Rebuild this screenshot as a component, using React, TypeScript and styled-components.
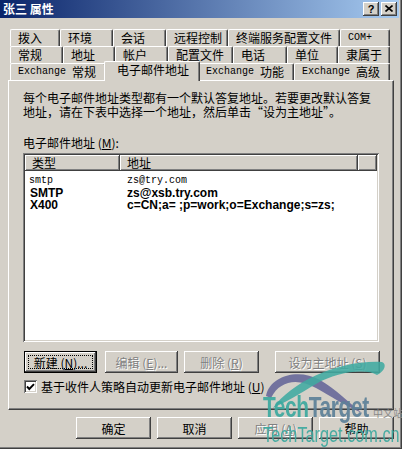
import React from "react";
import styled, { createGlobalStyle, css } from "styled-components";

const GlobalStyle = createGlobalStyle`
  html, body { margin: 0; padding: 0; background: #d4d0c8; }
  body { font-family: "Noto Sans CJK SC", sans-serif; font-size: 12px; }
  * { box-sizing: border-box; }
`;

const CJK = `"SimSun", "Noto Sans CJK SC", sans-serif`;

const raised = css`
  box-shadow: inset -1px -1px #404040, inset 1px 1px #ffffff,
    inset -2px -2px #808080, inset 2px 2px #d4d0c8;
`;
const sunken = css`
  box-shadow: inset 1px 1px #808080, inset -1px -1px #ffffff,
    inset 2px 2px #404040, inset -2px -2px #d4d0c8;
`;

const Window = styled.div`
  position: relative;
  width: 402px;
  height: 449px;
  background: #d4d0c8;
  padding: 0 3px 3px 0;
  box-shadow: inset -1px -1px #404040, inset -2px -2px #808080;
  display: flex;
  flex-direction: column;
  font-family: ${CJK};
  font-size: 12px;
  color: #000;
  overflow: hidden;
`;

const TitleBar = styled.div`
  height: 18px;
  flex: none;
  display: flex;
  align-items: center;
  justify-content: space-between;
  background: linear-gradient(to right, #0a246a, #a6caf0);
  padding: 0 2px 0 3px;
`;
const Title = styled.span`
  color: #fff;
  font-weight: 700;
  font-size: 12px;
  line-height: 18px;
`;
const TitleButtons = styled.div`
  display: flex;
  gap: 2px;
`;
const TitleButton = styled.div`
  width: 16px;
  height: 14px;
  background: #d4d0c8;
  ${raised};
  display: flex;
  align-items: center;
  justify-content: center;
  font-family: "Liberation Sans", sans-serif;
  font-weight: 700;
  font-size: 11px;
  line-height: 12px;
  padding-bottom: 1px;
`;

const Content = styled.div`
  display: flex;
  flex-direction: column;
  padding: 11px 5px 0 8px;
`;

const TabStrip = styled.div`
  display: flex;
  flex-direction: column;
  padding: 0 4px 0 2px;
`;
const TabRow = styled.div`
  display: flex;
  height: 17px;
`;
const Tab = styled.div<{ $w: number; $active?: boolean }>`
  width: ${(p) => p.$w}px;
  flex: none;
  height: 17px;
  background: #d4d0c8;
  border-top: 1px solid #fff;
  border-left: 1px solid #fff;
  border-right: 1px solid #404040;
  box-shadow: inset -1px 0 #808080;
  border-radius: 2px 2px 0 0;
  display: flex;
  align-items: center;
  padding-left: 7px;
  line-height: 14px;
  white-space: nowrap;
  ${(p) =>
    p.$active &&
    css`
      position: relative;
      z-index: 1;
      width: ${p.$w + 4}px;
      height: 20px;
      margin: -2px -2px -1px -2px;
      align-items: flex-start;
      padding-top: 1px;
      padding-left: 12px;
    `}
`;
const Mono = styled.span`
  font-family: "Liberation Mono", monospace;
  font-size: 10px;
  margin-right: 6px;
`;

const Panel = styled.div`
  height: 330px;
  border-top: 1px solid #fff;
  border-left: 1px solid #fff;
  border-right: 1px solid #404040;
  border-bottom: 1px solid #404040;
  box-shadow: inset -1px -1px #808080;
  padding: 10px 0 0 14px;
  display: flex;
  flex-direction: column;
`;
const Para = styled.p`
  margin: 0;
  line-height: 14px;
  white-space: nowrap;
`;
const Label = styled.div`
  margin-top: 17px;
  line-height: 14px;
`;

const ListBox = styled.div`
  width: 356px;
  height: 189px;
  margin-top: 3px;
  background: #fff;
  ${sunken};
  padding: 2px;
  display: flex;
  flex-direction: column;
`;
const HeaderRow = styled.div`
  display: flex;
  height: 16px;
`;
const HeaderCell = styled.div<{ $w?: number }>`
  ${(p) => (p.$w ? `width: ${p.$w}px; flex: none;` : "flex: 1;")}
  background: #d4d0c8;
  box-shadow: inset -1px -1px #404040, inset 1px 1px #fff, inset -2px -2px #808080;
  padding-left: 7px;
  line-height: 16px;
`;
const Rows = styled.div`
  padding-top: 4px;
  display: flex;
  flex-direction: column;
`;
const Row = styled.div`
  display: flex;
  height: 12px;
  align-items: center;
`;
const Cell = styled.div<{ $w: number; $pl: number; $bold?: boolean }>`
  width: ${(p) => p.$w}px;
  flex: none;
  padding-left: ${(p) => p.$pl}px;
  white-space: nowrap;
  ${(p) =>
    p.$bold
      ? css`
          font-family: "Liberation Sans", sans-serif;
          font-weight: 700;
          font-size: 12px;
          line-height: 12px;
        `
      : css`
          font-family: "Liberation Mono", monospace;
          font-size: 10px;
          line-height: 12px;
        `}
`;

const ButtonRow = styled.div`
  display: flex;
  margin-top: 9px;
  padding-left: 1px;
`;
const Button = styled.button<{ $w: number; $gap?: number; $default?: boolean; $focus?: boolean }>`
  position: relative;
  width: ${(p) => p.$w}px;
  height: 22px;
  flex: none;
  margin-left: ${(p) => p.$gap ?? 0}px;
  padding: 0;
  border: none;
  background: #d4d0c8;
  font-family: ${CJK};
  font-size: 12px;
  color: #000;
  ${raised};
  &:disabled {
    color: #808080;
    text-shadow: 1px 1px #fff;
  }
  ${(p) =>
    p.$default &&
    css`
      box-shadow: inset 0 0 0 1px #000, inset -2px -2px #404040,
        inset 2px 2px #fff, inset -3px -3px #808080;
    `}
  ${(p) =>
    p.$focus &&
    css`
      &::after {
        content: "";
        position: absolute;
        inset: 4px;
        border: 1px dotted #000;
      }
    `}
`;

const CheckRow = styled.div`
  display: flex;
  align-items: center;
  margin-top: 7px;
  padding-left: 1px;
  height: 13px;
  gap: 4px;
`;
const CheckBox = styled.span`
  width: 13px;
  height: 13px;
  flex: none;
  background: #fff;
  ${sunken};
  display: flex;
  align-items: center;
  justify-content: center;
`;

const Footer = styled.div`
  display: flex;
  justify-content: flex-end;
  gap: 6px;
  margin-top: 7px;
`;

const Watermark = styled.div`
  position: absolute;
  left: 258px;
  top: 360px;
  width: 144px;
  height: 89px;
  pointer-events: none;
  display: flex;
  flex-direction: column;
  padding: 33px 0 0 5px;
`;
const Swoosh = styled.svg`
  position: absolute;
  left: 0;
  top: 0;
`;
const BigRow = styled.div`
  display: flex;
  align-items: baseline;
  position: relative;
`;
const BigText = styled.div`
  width: 110px;
  flex: none;
  font-family: "Liberation Sans", sans-serif;
  font-weight: 700;
  font-size: 29px;
  line-height: 29px;
  letter-spacing: -0.5px;
  white-space: nowrap;
  transform: scaleX(0.72);
  transform-origin: left center;
`;
const Teal = styled.span`
  color: rgba(60, 168, 158, 0.92);
`;
const Slate = styled.span`
  color: rgba(92, 128, 152, 0.92);
`;
const Small = styled.span`
  font-family: ${CJK};
  font-size: 10px;
  color: #888;
  white-space: nowrap;
`;
const Domain = styled.div`
  margin-top: 3px;
  font-family: "Liberation Sans", sans-serif;
  font-size: 22px;
  line-height: 20px;
  color: rgba(60, 168, 158, 0.92);
  white-space: nowrap;
  transform: scaleX(0.74);
  transform-origin: left center;
  position: relative;
`;

const rows1 = [
  ["拨入", 50],
  ["环境", 53],
  ["会话", 53],
  ["远程控制", 62],
  ["终端服务配置文件", 112],
  ["COM+", 50],
] as const;
const rows2 = [
  ["常规", 53],
  ["地址", 52],
  ["帐户", 53],
  ["配置文件", 65],
  ["电话", 54],
  ["单位", 51],
  ["隶属于", 52],
] as const;

export default function App() {
  return (
    <>
      <GlobalStyle />
      <Window>
        <TitleBar>
          <Title>张三 属性</Title>
          <TitleButtons>
            <TitleButton>?</TitleButton>
            <TitleButton>
              <svg width="8" height="7" viewBox="0 0 8 7">
                <path d="M0.5 0.5 L7.5 6.5 M7.5 0.5 L0.5 6.5" stroke="#000" strokeWidth="1.6" />
              </svg>
            </TitleButton>
          </TitleButtons>
        </TitleBar>
        <Content>
          <TabStrip>
            <TabRow>
              {rows1.map(([t, w]) => (
                <Tab key={t} $w={w}>
                  {t === "COM+" ? <Mono>COM+</Mono> : t}
                </Tab>
              ))}
            </TabRow>
            <TabRow>
              {rows2.map(([t, w]) => (
                <Tab key={t} $w={w}>
                  {t}
                </Tab>
              ))}
            </TabRow>
            <TabRow>
              <Tab $w={96}>
                <Mono>Exchange</Mono>常规
              </Tab>
              <Tab $w={92} $active>
                电子邮件地址
              </Tab>
              <Tab $w={96}>
                <Mono>Exchange</Mono>功能
              </Tab>
              <Tab $w={96}>
                <Mono>Exchange</Mono>高级
              </Tab>
            </TabRow>
          </TabStrip>
          <Panel>
            <Para>
              每个电子邮件地址类型都有一个默认答复地址。若要更改默认答复
              <br />
              地址，请在下表中选择一个地址，然后单击“设为主地址”。
            </Para>
            <Label>
              电子邮件地址 (<u>M</u>):
            </Label>
            <ListBox>
              <HeaderRow>
                <HeaderCell $w={95}>类型</HeaderCell>
                <HeaderCell $w={238}>地址</HeaderCell>
                <HeaderCell />
              </HeaderRow>
              <Rows>
                <Row>
                  <Cell $w={95} $pl={4}>smtp</Cell>
                  <Cell $w={238} $pl={7}>zs@try.com</Cell>
                </Row>
                <Row>
                  <Cell $w={95} $pl={5} $bold>SMTP</Cell>
                  <Cell $w={238} $pl={7} $bold>zs@xsb.try.com</Cell>
                </Row>
                <Row>
                  <Cell $w={95} $pl={5} $bold>X400</Cell>
                  <Cell $w={238} $pl={7} $bold>c=CN;a= ;p=work;o=Exchange;s=zs;</Cell>
                </Row>
              </Rows>
            </ListBox>
            <ButtonRow>
              <Button $w={73} $default $focus>
                新建 (<u>N</u>)...
              </Button>
              <Button $w={73} $gap={8} disabled>
                编辑 (<u>E</u>)...
              </Button>
              <Button $w={75} $gap={6} disabled>
                删除 (<u>R</u>)
              </Button>
              <Button $w={105} $gap={16} disabled>
                设为主地址 (<u>S</u>)
              </Button>
            </ButtonRow>
            <CheckRow>
              <CheckBox>
                <svg width="9" height="8" viewBox="0 0 9 8">
                  <polyline points="1,3.5 3.3,6 8,1.2" fill="none" stroke="#000" strokeWidth="1.9" />
                </svg>
              </CheckBox>
              <span>
                基于收件人策略自动更新电子邮件地址 (<u>U</u>)
              </span>
            </CheckRow>
          </Panel>
          <Footer>
            <Button $w={75}>确定</Button>
            <Button $w={75}>取消</Button>
            <Button $w={75} disabled>
              应用 (<u>A</u>)
            </Button>
            <Button $w={75}>帮助</Button>
          </Footer>
        </Content>
        <Watermark>
          <Swoosh width="144" height="60" viewBox="0 0 144 60">
            <path
              d="M8 36 C12 16 40 8 62 20 C78 29 92 44 104 53 C88 46 72 36 58 28 C40 18 22 20 13 38 Z"
              fill="rgba(96, 98, 150, 0.85)"
            />
            <path
              d="M15 48 C34 22 80 0 124 2 C129 4 127 11 119 15 C108 8 78 12 58 24 C43 33 28 42 15 48 Z"
              fill="rgba(64, 170, 160, 0.88)"
            />
          </Swoosh>
          <BigRow>
            <BigText>
              <Teal>Tech</Teal>
              <Slate>Target</Slate>
            </BigText>
            <Small>中文站</Small>
          </BigRow>
          <Domain>TechTarget.com.cn</Domain>
        </Watermark>
      </Window>
    </>
  );
}
